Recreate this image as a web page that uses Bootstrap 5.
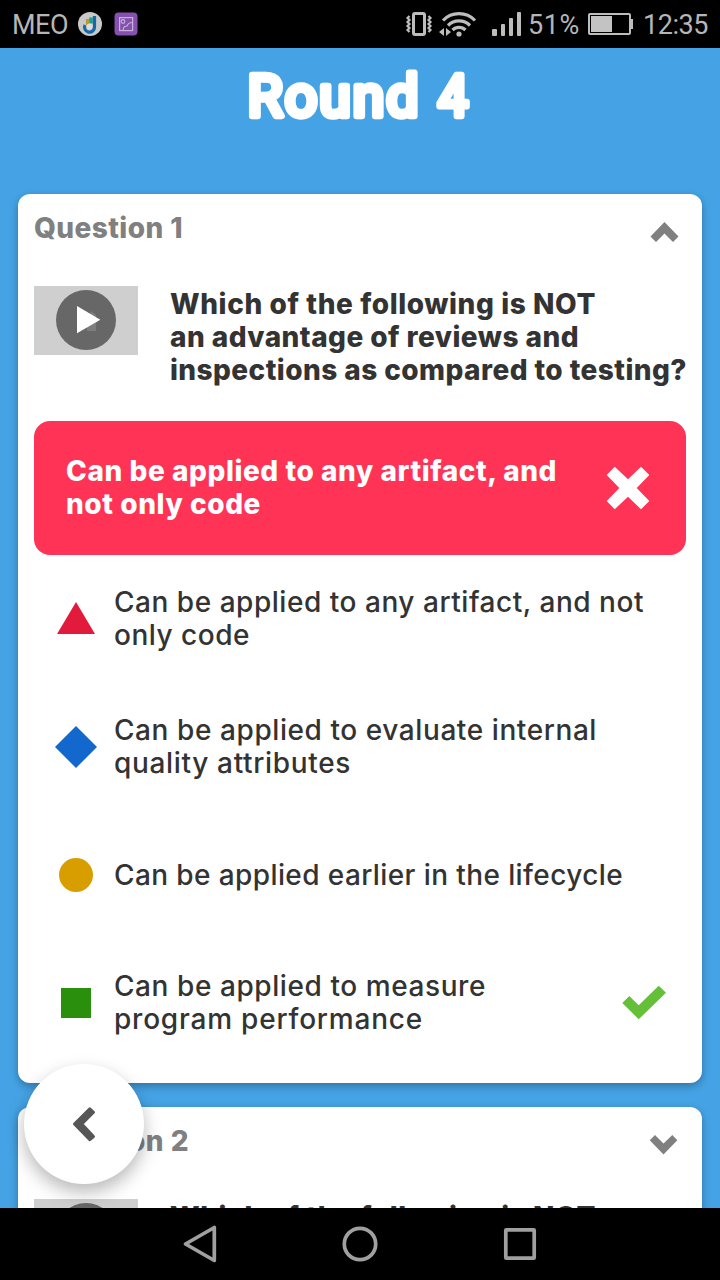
<!DOCTYPE html>
<html lang="en">
<head>
<meta charset="utf-8">
<meta name="viewport" content="width=device-width, initial-scale=1">
<title>Round 4</title>
<link href="https://cdn.jsdelivr.net/npm/bootstrap@5.3.0/dist/css/bootstrap.min.css" rel="stylesheet">
<style>
  body { font-family: Inter, "Open Sans", sans-serif; color: #333; }
  svg { display: block; flex: none; }
  .screen { width: 720px; height: 1280px; background: #45a3e5; }
  .status-bar { height: 48px; background: #000; color: #b6b6b6; font: 400 27px/48px Roboto, sans-serif; padding: 2px 12px 0 12px; }
  .nav-keys { height: 72px; background: #000; z-index: 3; }
  .round-title { height: 146px; }
  .round-title text { font: 400 57px Roboto, sans-serif; fill: #fff; stroke: #fff; stroke-width: 6.5px; stroke-linejoin: round; }
  .quiz-card { margin: 0 18px 24px; padding: 0 16px 16px; border-radius: 12px; border: 0; box-shadow: 0 3px 8px rgba(0,0,0,.3); height: 889px; flex: none; }
  .quiz-head { height: 92px; color: #808080; font-weight: 800; font-size: 28px; line-height: 33px; padding-top: 18px; }
  .quiz-head svg { margin: 9px 6px 0 0; }
  .question { height: 135px; gap: 32px; font-weight: 800; }
  .lines { font-size: 28px; line-height: 33px; }
  .question .lines { margin-top: 2px; }
  .lines span, .quiz-head span { display: block; white-space: nowrap; width: max-content; }
  .chosen { height: 134px; border-radius: 16px; background: #ff3355; color: #fff; font-weight: 800; padding: 0 36px 0 32px; }
  .option { height: 128px; padding: 0 20px; font-weight: 500; }
  .option .shape { margin-right: 16px; }
  .back-btn { left: 24px; top: 1064px; width: 120px; height: 120px; box-shadow: 0 8px 18px rgba(0,0,0,.28); z-index: 2; padding: 0; border: 0; }
</style>
</head>
<body>
<div class="screen d-flex flex-column overflow-hidden position-relative">
  <header class="status-bar d-flex align-items-center flex-shrink-0">
    <span data-w="56">MEO</span>
    <svg style="margin-left:10px;margin-top:-2px" width="24" height="24" viewBox="78 12 24 24"><circle cx="90" cy="24" r="12" fill="#c9c9c9"/><path d="M87.500 19v6" stroke="#b99a35" stroke-width="3.200"/><path d="M91 17.500v6" stroke="#14a28c" stroke-width="3.600"/><path d="M94.500 16v11a5 5 0 1 1-9.500-2" fill="none" stroke="#1768a8" stroke-width="3.200"/><circle cx="89.500" cy="26.500" r="2.900" fill="#ddd"/></svg>
    <svg style="margin-left:12px;margin-top:-2px" width="24" height="24" viewBox="114 12 24 24"><rect x="114.500" y="12.500" width="23" height="23" rx="4" fill="#8550b0"/><g fill="none" stroke="#c6b2d5" stroke-width="1.200"><rect x="119.600" y="17.600" width="13" height="13"/><circle cx="123" cy="21.500" r="1.800"/><path d="M123 30c1-4 2-4 4-4 1-3 3-3.500 5.500-3.500"/></g></svg>
    <svg class="ms-auto" style="margin-top:-2px" width="117" height="48" viewBox="405 0 117 48"><g fill="none" stroke="#bdbdbd">
      <rect x="413.500" y="13.500" width="11" height="21" rx="1.500" stroke-width="3"/>
      <path d="M409.500 16l-2 2 2 2-2 2 2 2-2 2 2 2-2 2 2 2M428.500 16l2 2-2 2 2 2-2 2 2 2-2 2 2 2-2 2" stroke-width="2.200"/>
      <path d="M443 20.500a22 22 0 0 1 32 0M448 25.500a15.500 15.500 0 0 1 22 0M452.500 30a9.200 9.200 0 0 1 13 0" stroke-width="3.200"/></g>
      <g fill="#bdbdbd"><circle cx="459" cy="34" r="2.600"/><path d="M444 28v8l-5-4zM446 28v8l5-4z"/><rect x="492" y="29" width="5" height="7" rx="1"/><rect x="501" y="24" width="4" height="12" rx="1"/><rect x="509" y="18" width="4" height="18" rx="1"/><rect x="517" y="12" width="4" height="24" rx="1"/></g></svg>
    <span data-w="52" style="margin-left:6px">51%</span>
    <svg style="margin-left:8px;margin-top:-2px" width="46" height="24" viewBox="588 12 46 24"><rect x="589" y="14" width="41" height="20" rx="1" fill="none" stroke="#bdbdbd" stroke-width="2"/><rect x="591" y="16" width="21" height="16" fill="#c3c3c3"/><rect x="630.500" y="19" width="2.500" height="10" fill="#bdbdbd"/></svg>
    <span data-w="65" style="margin-left:9px">12:35</span>
  </header>

  <div class="round-title flex-shrink-0">
    <svg width="720" height="146" viewBox="0 48 720 146" role="heading" aria-level="1"><text x="247.500" y="116" textLength="171" lengthAdjust="spacing">Round</text><text x="438" y="116" textLength="30" lengthAdjust="spacingAndGlyphs">4</text></svg>
  </div>

  <section class="card quiz-card">
    <div class="quiz-head d-flex justify-content-between align-items-start"><span data-w="149">Question 1</span>
      <svg width="30" height="22" viewBox="650 221 30 22"><path fill="#808080" d="M664.500 222l14 14.500-5.500 5.500-8.500-8.500-8.500 8.500-5.500-5.500z"/></svg></div>
    <div class="question d-flex align-items-start">
      <svg width="104" height="69" viewBox="34 286 104 69"><rect x="34" y="286" width="104" height="69" fill="#cfcfcf"/><circle cx="86" cy="320" r="30" fill="#676767"/><path d="M87 331v-8l4-12 5 4v16z" fill="#7d7d7d"/><path d="M77 306l23.300 13.700L77 333.300z" fill="#fff"/></svg>
      <div class="lines"><span data-w="426">Which of the following is NOT</span><span data-w="409">an advantage of reviews and</span><span data-w="517">inspections as compared to testing?</span></div>
    </div>
    <div class="chosen d-flex align-items-center justify-content-between flex-shrink-0">
      <div class="lines"><span data-w="491">Can be applied to any artifact, and</span><span data-w="195">not only code</span></div>
      <svg width="44" height="44" viewBox="0 0 44 44"><path fill="#fff" d="M8.700.7L22 13.300 35 .7 43.300 9 30.700 22 43.300 35 35 43.300 22 30.700 8.700 43.300.7 35 13.300 22 .7 9z"/></svg>
    </div>
    <div class="option d-flex align-items-center"><svg class="shape" width="44" height="44" viewBox="0 0 44 44"><path fill="#e21b3c" d="M22 5l19 32H3z"/></svg>
      <div class="lines"><span data-w="530">Can be applied to any artifact, and not</span><span data-w="136">only code</span></div></div>
    <div class="option d-flex align-items-center"><svg class="shape" width="44" height="44" viewBox="0 0 44 44"><path fill="#1368ce" d="M22 1l21 21-21 21L1 22z"/></svg>
      <div class="lines"><span data-w="483">Can be applied to evaluate internal</span><span data-w="237">quality attributes</span></div></div>
    <div class="option d-flex align-items-center"><svg class="shape" width="44" height="44" viewBox="0 0 44 44"><circle cx="22" cy="22" r="17" fill="#d89e00"/></svg>
      <div class="lines"><span data-w="509">Can be applied earlier in the lifecycle</span></div></div>
    <div class="option d-flex align-items-center"><svg class="shape" width="44" height="44" viewBox="0 0 44 44"><path fill="#298f0d" d="M7 7h30v30H7z"/></svg>
      <div class="lines"><span data-w="372">Can be applied to measure</span><span data-w="309">program performance</span></div>
      <svg class="ms-auto" width="44" height="36" viewBox="622 985 44 36"><path fill="#66bf39" d="M622.300 1003l7-7 9.400 9.300 20-19.600 7.300 7-27.300 26.600z"/></svg></div>
  </section>

  <section class="card quiz-card">
    <div class="quiz-head d-flex justify-content-between align-items-start"><span data-w="155">Question 2</span>
      <svg width="30" height="22" viewBox="650 1134 30 22"><path fill="#808080" d="M655 1135l8.500 8.600 8.800-8.600 5 5.300-13.800 14.300-13.800-14.300z"/></svg></div>
    <div class="question d-flex align-items-start">
      <svg width="104" height="69" viewBox="34 286 104 69"><rect x="34" y="286" width="104" height="69" fill="#cfcfcf"/><circle cx="86" cy="320" r="30" fill="#676767"/></svg>
      <div class="lines"><span data-w="426">Which of the following is NOT</span></div>
    </div>
  </section>

  <button class="back-btn btn bg-white rounded-circle position-absolute" aria-label="Back">
    <svg width="120" height="120" viewBox="24 1064 120 120"><path fill="#575757" stroke="#575757" stroke-width="3" stroke-linejoin="round" d="M74.500 1124l15.300-15.200 3.700 3.500-11.700 11.700 11.700 12.500-3.700 3.200z"/></svg>
  </button>

  <nav class="nav-keys position-absolute bottom-0 start-0 w-100">
    <svg width="720" height="72" viewBox="0 1208 720 72" fill="none" stroke="#a0a0a0" stroke-width="3.700" stroke-linejoin="round"><path d="M185.500 1244l28.800-16.500v33z"/><circle cx="360" cy="1244" r="15.700"/><rect x="505.800" y="1229.800" width="28.400" height="28.400" rx=".5"/></svg>
  </nav>
</div>
<script src="https://cdn.jsdelivr.net/npm/bootstrap@5.3.0/dist/js/bootstrap.bundle.min.js"></script>
<script>
  // Track each line of text out to its measure.
  document.querySelectorAll('[data-w]').forEach(function (line) {
    var spare = line.dataset.w - line.getBoundingClientRect().width;
    line.style.letterSpacing = (spare / line.textContent.length).toFixed(3) + 'px';
  });
</script>
</body>
</html>
